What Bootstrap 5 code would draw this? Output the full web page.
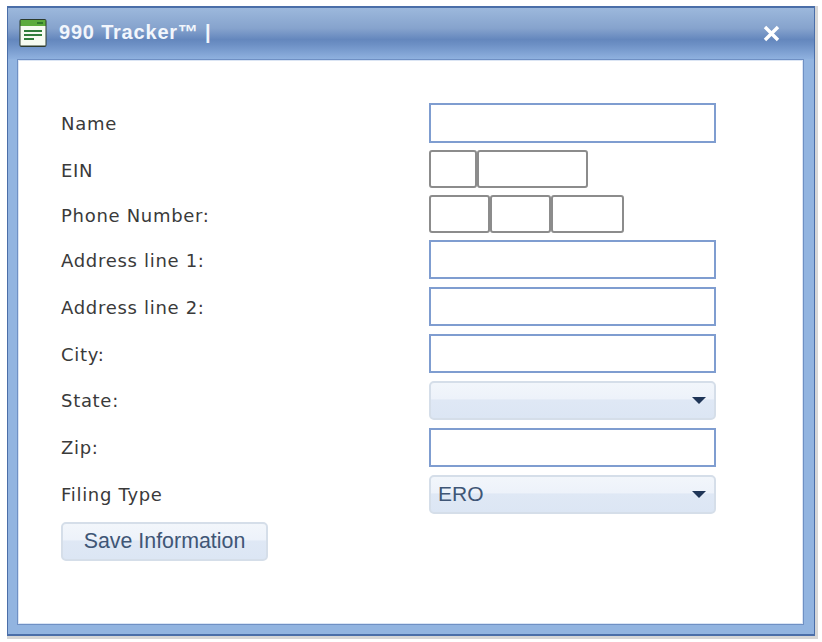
<!DOCTYPE html>
<html lang="en">
<head>
    <meta charset="UTF-8">
    <meta name="viewport" content="width=device-width, initial-scale=1.0">
    <title>990 Tracker</title>
    <link rel="stylesheet" href="https://cdn.jsdelivr.net/npm/bootstrap@5.3.2/dist/css/bootstrap.min.css">
    <style>
        html, body {
            height: 100%;
        }
        body {
            background-color: #fff;
            padding: 6px 4px 3px 7px;
            overflow: hidden;
        }
        .tracker-shadow {
            width: 811px;
            height: 633px;
            background-color: #d6d6d6;
            padding: 0 3px 3px 0;
        }
        .tracker-win {
            height: 100%;
            background-color: #92b4e0;
            border: 1px solid #4a6ea8;
            border-top-width: 2px;
            border-bottom-width: 2px;
            padding: 0 10px 9px 9px;
        }
        .tracker-head {
            height: 51px;
            margin: 0 -10px 0 -9px;
            padding: 0 34px 0 11px;
            background: linear-gradient(#9cb8dc 0, #86a3cd 40%, #6487bd 62%, #6d90c5 72%, #8fb1df 100%);
        }
        .tracker-icon {
            margin: 0 12px 2px 0;
        }
        .tracker-title {
            margin-bottom: 4px;
            font-family: "Liberation Sans", Arial, sans-serif;
            font-weight: 700;
            font-size: 20px;
            letter-spacing: 0.8px;
            color: #f2f6fc;
        }
        .tracker-body {
            height: 566px;
            background-color: #fff;
            border: 1px solid #6f90c4;
            outline: 1px solid #dbe5f4;
            outline-offset: -2px;
            padding: 43px 86px 0 43px;
        }
        .field-row {
            height: 39px;
            margin-bottom: 8px;
        }
        .field-row.first-row {
            height: 40px;
            margin-bottom: 7px;
        }
        .field-row.part-row {
            height: 38px;
            margin-bottom: 7px;
        }
        .field-label {
            width: 368px;
            padding-top: 1px;
            font-family: "DejaVu Sans", Verdana, sans-serif;
            font-size: 18px;
            letter-spacing: 0.7px;
            color: #3a3a3a;
        }
        .part-row .field-label {
            padding-top: 3px;
        }
        .low-row .field-label {
            padding-top: 0;
            margin-bottom: 1px;
        }
        .blue-input {
            width: 287px;
            height: 100%;
            background-color: #fff;
            border: 2px solid #7f9dd0;
            border-radius: 0;
        }
        .part-input {
            height: 100%;
            background-color: #fff;
            border: 2px solid #8c8c8c;
            border-radius: 3px;
        }
        .w-48 { width: 48px; }
        .w-111 { width: 111px; }
        .w-61 { width: 61px; }
        .w-73 { width: 73px; }
        .blue-select {
            width: 287px;
            height: 100%;
            padding: 0 8px 1px 7px;
            border: 2px solid #d5dee9;
            border-radius: 5px;
            background: linear-gradient(#f2f6fb 0, #edf2fa 46%, #dfe8f5 48%, #dce6f4 100%);
            font-family: "Liberation Sans", Arial, sans-serif;
            font-size: 21px;
            color: #3f5676;
        }
        .select-arrow {
            width: 0;
            height: 0;
            margin-left: auto;
            border-left: 7px solid transparent;
            border-right: 7px solid transparent;
            border-top: 7px solid #1f3557;
        }
        .save-btn {
            width: 207px;
            height: 39px;
            padding: 0;
            border: 2px solid #d5dee9;
            border-radius: 5px;
            background: linear-gradient(#f2f6fb 0, #edf2fa 46%, #dfe8f5 48%, #dce6f4 100%);
            font-family: "Liberation Sans", Arial, sans-serif;
            font-size: 21.4px;
            color: #3f5676;
        }
    </style>
</head>
<body>
    <div class="tracker-shadow">
        <div class="tracker-win">
            <div class="tracker-head d-flex align-items-center">
                <svg width="28" height="30" viewBox="0 0 28 30" class="tracker-icon flex-shrink-0">
                    <rect x="0.5" y="1" width="27" height="28" rx="2" fill="#2c3a2c"/>
                    <rect x="1.5" y="2" width="25" height="6" fill="#5cab3c"/>
                    <rect x="18" y="4" width="6" height="2" fill="#2f7a2a"/>
                    <rect x="1.5" y="8" width="25" height="19.5" fill="#f6fbf1"/>
                    <rect x="5" y="12" width="18" height="2" fill="#2f7d3a"/>
                    <rect x="5" y="16" width="18" height="2" fill="#2f7d3a"/>
                    <rect x="5" y="20" width="10" height="2" fill="#2f7d3a"/>
                </svg>
                <span class="tracker-title">990 Tracker™ |</span>
                <svg width="17" height="17" viewBox="0 0 17 17" class="ms-auto">
                    <path d="M2 2 L15 15 M15 2 L2 15" stroke="#fff" stroke-width="3.4"/>
                </svg>
            </div>
            <div class="tracker-body">
                <form>
                    <div class="field-row first-row d-flex align-items-center">
                        <label class="field-label">Name</label>
                        <input type="text" class="blue-input">
                    </div>
                    <div class="field-row part-row d-flex align-items-center">
                        <label class="field-label">EIN</label>
                        <input type="text" class="part-input w-48">
                        <input type="text" class="part-input w-111">
                    </div>
                    <div class="field-row part-row d-flex align-items-center">
                        <label class="field-label">Phone Number:</label>
                        <input type="text" class="part-input w-61">
                        <input type="text" class="part-input w-61">
                        <input type="text" class="part-input w-73">
                    </div>
                    <div class="field-row d-flex align-items-center">
                        <label class="field-label">Address line 1:</label>
                        <input type="text" class="blue-input">
                    </div>
                    <div class="field-row d-flex align-items-center">
                        <label class="field-label">Address line 2:</label>
                        <input type="text" class="blue-input">
                    </div>
                    <div class="field-row d-flex align-items-center">
                        <label class="field-label">City:</label>
                        <input type="text" class="blue-input">
                    </div>
                    <div class="field-row low-row d-flex align-items-center">
                        <label class="field-label">State:</label>
                        <div class="blue-select d-flex align-items-center"><span class="select-arrow"></span></div>
                    </div>
                    <div class="field-row low-row d-flex align-items-center">
                        <label class="field-label">Zip:</label>
                        <input type="text" class="blue-input">
                    </div>
                    <div class="field-row low-row d-flex align-items-center mb-2">
                        <label class="field-label">Filing Type</label>
                        <div class="blue-select d-flex align-items-center">ERO<span class="select-arrow"></span></div>
                    </div>
                    <button type="button" class="save-btn">Save Information</button>
                </form>
            </div>
        </div>
    </div>
    <script src="https://cdn.jsdelivr.net/npm/bootstrap@5.3.2/dist/js/bootstrap.bundle.min.js"></script>
</body>
</html>
